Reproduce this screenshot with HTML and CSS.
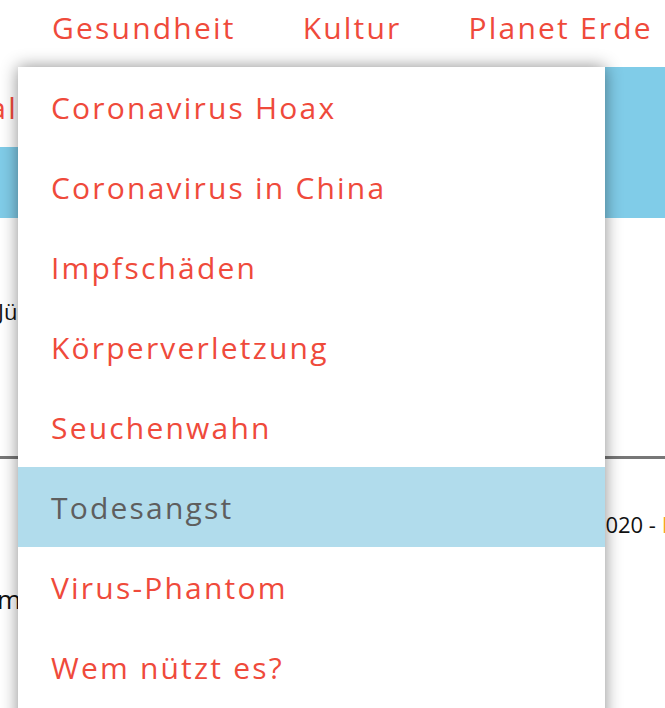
FILE: index.html
```html
<!DOCTYPE html>
<html lang="de">
  <head>
    <meta charset="UTF-8" />
    <meta name="viewport" content="width=device-width, initial-scale=1.0" />
    <title>Gesundheit</title>
    <link rel="stylesheet" href="styles.css">
  </head>
  <body>
    <div class="page">
      <header class="site-header">
        <nav class="main-nav">
          <a href="#" class="nav-link">Gesundheit</a>
          <a href="#" class="nav-link">Kultur</a>
          <a href="#" class="nav-link">Planet Erde</a>
        </nav>
        <nav class="sub-nav">
          <span class="clip"><a href="#" class="nav-link">Regional</a></span>
          <a href="#" class="nav-link current">Wissen</a>
        </nav>
        <div class="banner"></div>

        <ul class="dropdown">
          <li><a href="#">Coronavirus Hoax</a></li>
          <li><a href="#">Coronavirus in China</a></li>
          <li><a href="#">Impfschäden</a></li>
          <li><a href="#">Körperverletzung</a></li>
          <li><a href="#">Seuchenwahn</a></li>
          <li class="active"><a href="#">Todesangst</a></li>
          <li><a href="#">Virus-Phantom</a></li>
          <li><a href="#">Wem nützt es?</a></li>
        </ul>
      </header>

      <main class="content">
        <p class="intro">Jü<span>ngste Beiträge</span></p>
        <hr class="rule" />
        <p class="meta">12. April 2020 - <span class="author">Redaktion</span></p>
        <p class="teaser">m</p>
      </main>
    </div>
  </body>
</html>
```

FILE: styles.css
```css
body {
  margin: 0;
  font-family: "Open Sans", "Noto Sans", sans-serif;
  color: #111;
  background: #fff;
}
.page {
  position: relative;
  height: 708px;
  overflow: hidden;
}
.nav-link {
  font-size: 30px;
  letter-spacing: 2.2px;
  color: #ef4a3b;
  text-decoration: none;
  white-space: nowrap;
}
.main-nav {
  display: flex;
  gap: 67px;
  height: 67px;
  padding-left: 52px;
  align-items: center;
  padding-bottom: 12px;
  box-sizing: border-box;
}
.sub-nav {
  display: flex;
  justify-content: space-between;
  height: 80px;
}
.sub-nav .clip {
  width: 18px;
  overflow: hidden;
  display: flex;
  justify-content: flex-end;
  align-items: center;
}
.sub-nav .current {
  background: #80cce8;
  width: 170px;
  display: flex;
  align-items: center;
  padding-left: 20px;
  color: #fff;
}
.banner {
  height: 71px;
  background: #80cce8;
}
.dropdown {
  position: absolute;
  top: 67px;
  left: 18px;
  width: 587px;
  margin: 0;
  padding: 0 0 20px;
  list-style: none;
  background: #fff;
  box-shadow: 0 0 16px rgba(0, 0, 0, 0.45);
  z-index: 10;
}
.dropdown li a {
  display: flex;
  align-items: center;
  height: 80px;
  padding-left: 33px;
  font-size: 30px;
  letter-spacing: 2.2px;
  color: #ef4a3b;
  text-decoration: none;
}
.dropdown li.active {
  background: #b1dcec;
}
.dropdown li.active a {
  color: #5e5e5e;
}
.content {
  font-size: 22px;
}
.intro {
  margin: 78px 0 0 -2px;
}
.rule {
  margin: 130px 0 0;
  border: 0;
  border-top: 3px solid #777;
}
.meta {
  margin: 50px 0 0 503px;
  white-space: nowrap;
}
.author {
  color: #f5a623;
}
.teaser {
  margin: 42px 0 0 -3px;
  font-size: 26px;
}
```
